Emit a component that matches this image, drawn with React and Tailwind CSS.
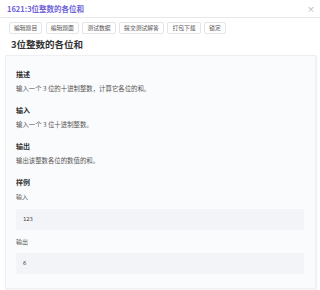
export default function App() {
  const font = { fontFamily: '"Noto Sans CJK SC", "Noto Sans", sans-serif' };
  const buttons = ["编辑题目", "编辑题面", "测试数据", "提交测试解答", "打包下载", "锁定"];
  return (
    <div className="w-[320px] h-[290px] bg-white overflow-hidden text-[#333]" style={font}>
      <div className="h-[18px] border-b border-[#e8e8e8] flex items-center justify-between pl-[7px] pr-[5px]">
        <span className="text-[7.5px] leading-[10px] font-semibold text-[#6f63d8]">1621:3位整数的各位和</span>
        <span className="text-[8px] leading-[10px] text-[#aaa]">×</span>
      </div>
      <div className="flex gap-[3.5px] pl-[9px] mt-[4px]">
        {buttons.map((b) => (
          <div
            key={b}
            className="h-[12px] px-[4px] flex items-center border border-[#e3e5ea] rounded-[2px] text-[5.8px] leading-[8px] text-[#555] bg-white"
          >
            {b}
          </div>
        ))}
      </div>
      <div className="mt-[4px] pl-[11px] text-[9.5px] leading-[13px] font-bold text-[#333]">3位整数的各位和</div>
      <div className="mt-[4px] ml-[5px] w-[311px] border border-[#eeeff2] bg-[#fafbfc] shadow-[1px_1px_2px_rgba(0,0,0,0.06)] pl-[10px] pr-[11px] pt-[13px] pb-[14px]">
        <div className="text-[7px] leading-[10px] font-bold text-[#333]">描述</div>
        <div className="mt-[5px] text-[6.4px] leading-[10px] text-[#555]">输入一个 3 位的十进制整数，计算它各位的和。</div>
        <div className="mt-[11px] text-[7px] leading-[10px] font-bold text-[#333]">输入</div>
        <div className="mt-[5px] text-[6.4px] leading-[10px] text-[#555]">输入一个 3 位十进制整数。</div>
        <div className="mt-[11px] text-[7px] leading-[10px] font-bold text-[#333]">输出</div>
        <div className="mt-[5px] text-[6.4px] leading-[10px] text-[#555]">输出该整数各位的数值的和。</div>
        <div className="mt-[11px] text-[7px] leading-[10px] font-bold text-[#333]">样例</div>
        <div className="mt-[5px] text-[6px] leading-[10px] text-[#555]">输入</div>
        <div
          className="mt-[7px] h-[21px] bg-[#f3f4f7] flex items-center pl-[7px] text-[5.5px] text-[#444]"
          style={{ fontFamily: '"DejaVu Sans Mono", monospace' }}
        >
          123
        </div>
        <div className="mt-[7px] text-[6px] leading-[10px] text-[#555]">输出</div>
        <div
          className="mt-[6px] h-[21px] bg-[#f3f4f7] flex items-center pl-[7px] text-[5.5px] text-[#444]"
          style={{ fontFamily: '"DejaVu Sans Mono", monospace' }}
        >
          6
        </div>
      </div>
    </div>
  );
}
